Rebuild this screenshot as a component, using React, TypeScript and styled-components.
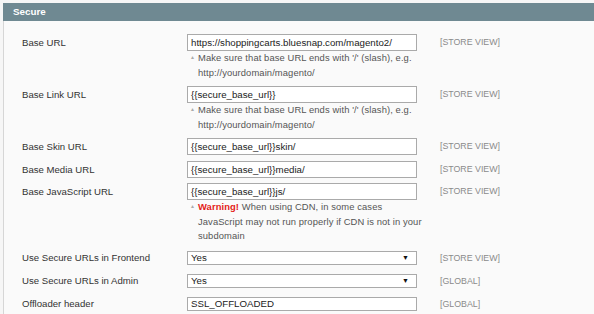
import React from 'react';
import styled, { createGlobalStyle } from 'styled-components';

const GlobalStyle = createGlobalStyle`
    html, body {
        margin: 0;
        padding: 0;
        background: #f6f6f6;
        font-family: "Liberation Sans", Arial, sans-serif;
    }
`;

export const Page = styled.div`
    padding: 3px 0 0 3px;
    width: 591px;
    height: 311px;
    overflow: hidden;
`;

const Head = styled.div`
    height: 18px;
    background-color: #6f8992;
    color: #fff;
    font-weight: bold;
    font-size: 9.8px;
    line-height: 18px;
    padding-left: 10px;
`;

const Fieldset = styled.div`
    background: #fafafa;
    border-left: 1px solid #d6d6d6;
    padding: 13px 0 0 18px;
    height: 300px;
`;

const Row = styled.div<{ $gap?: number }>`
    display: grid;
    grid-template-columns: 165px 230px 1fr;
    align-items: start;
    margin-bottom: ${(p) => (p.$gap ?? 6)}px;
`;

const Label = styled.div<{ $h: number }>`
    font-size: 9.6px;
    color: #333;
    line-height: ${(p) => p.$h}px;
    white-space: nowrap;
`;

const Field = styled.div<{ $h: number }>`
    box-sizing: border-box;
    height: ${(p) => p.$h}px;
    border: 1px solid #aaa;
    background: #fff;
    font-size: 9.7px;
    color: #222;
    line-height: ${(p) => p.$h - 2}px;
    padding: 0 3px;
    white-space: nowrap;
    overflow: hidden;
    display: flex;
    justify-content: space-between;
    align-items: center;
`;

const Arrow = styled.span`
    font-size: 7px;
    color: #111;
    margin-right: 4px;
`;

const Scope = styled.div<{ $h: number }>`
    font-size: 8.8px;
    color: #8a8a8a;
    line-height: ${(p) => p.$h}px;
    padding-left: 23px;
    white-space: nowrap;
`;

const Note = styled.div`
    font-size: 9.4px;
    letter-spacing: 0.1px;
    color: #555;
    line-height: 14.7px;
    padding: 0 0 0 11px;
    margin-right: -6px;
    text-indent: -8px;
    margin-top: -1px;
`;

const Tri = styled.span`
    display: inline-block;
    width: 8px;
    text-indent: 0;
    font-size: 5px;
    color: #aaa;
    vertical-align: 2px;
`;

const Warn = styled.b`
    color: #e41b17;
`;

type Item = {
    label: string;
    value: string;
    scope: string;
    select?: boolean;
    note?: React.ReactNode;
    h: number;
    gap?: number;
};

const slashNote = (
    <>
        <Tri>▲</Tri>Make sure that base URL ends with '/' (slash), e.g. http://yourdomain/magento/
    </>
);

const items: Item[] = [
    { label: 'Base URL', value: 'https://shoppingcarts.bluesnap.com/magento2/', scope: '[STORE VIEW]', note: slashNote, h: 17 },
    { label: 'Base Link URL', value: '{{secure_base_url}}', scope: '[STORE VIEW]', note: slashNote, h: 17, gap: 5 },
    { label: 'Base Skin URL', value: '{{secure_base_url}}skin/', scope: '[STORE VIEW]', h: 17 },
    { label: 'Base Media URL', value: '{{secure_base_url}}media/', scope: '[STORE VIEW]', h: 17, gap: 5 },
    {
        label: 'Base JavaScript URL',
        value: '{{secure_base_url}}js/',
        scope: '[STORE VIEW]',
        h: 17,
        gap: 7,
        note: (
            <>
                <Tri>▲</Tri>
                <Warn>Warning!</Warn> When using CDN, in some cases JavaScript may not run properly if CDN is not in your subdomain
            </>
        ),
    },
    { label: 'Use Secure URLs in Frontend', value: 'Yes', scope: '[STORE VIEW]', select: true, h: 14, gap: 9 },
    { label: 'Use Secure URLs in Admin', value: 'Yes', scope: '[GLOBAL]', select: true, h: 14, gap: 9 },
    { label: 'Offloader header', value: 'SSL_OFFLOADED', scope: '[GLOBAL]', h: 14 },
];

const App = () => {
    return (
        <Page>
            <GlobalStyle />
            <Head>Secure</Head>
            <Fieldset>
                {items.map((it) => (
                    <Row key={it.label} $gap={it.gap}>
                        <Label $h={it.h}>{it.label}</Label>
                        <div>
                            <Field $h={it.h}>
                                <span>{it.value}</span>
                                {it.select && <Arrow>▼</Arrow>}
                            </Field>
                            {it.note && <Note>{it.note}</Note>}
                        </div>
                        <Scope $h={it.h}>{it.scope}</Scope>
                    </Row>
                ))}
            </Fieldset>
        </Page>
    );
};

export default App;
